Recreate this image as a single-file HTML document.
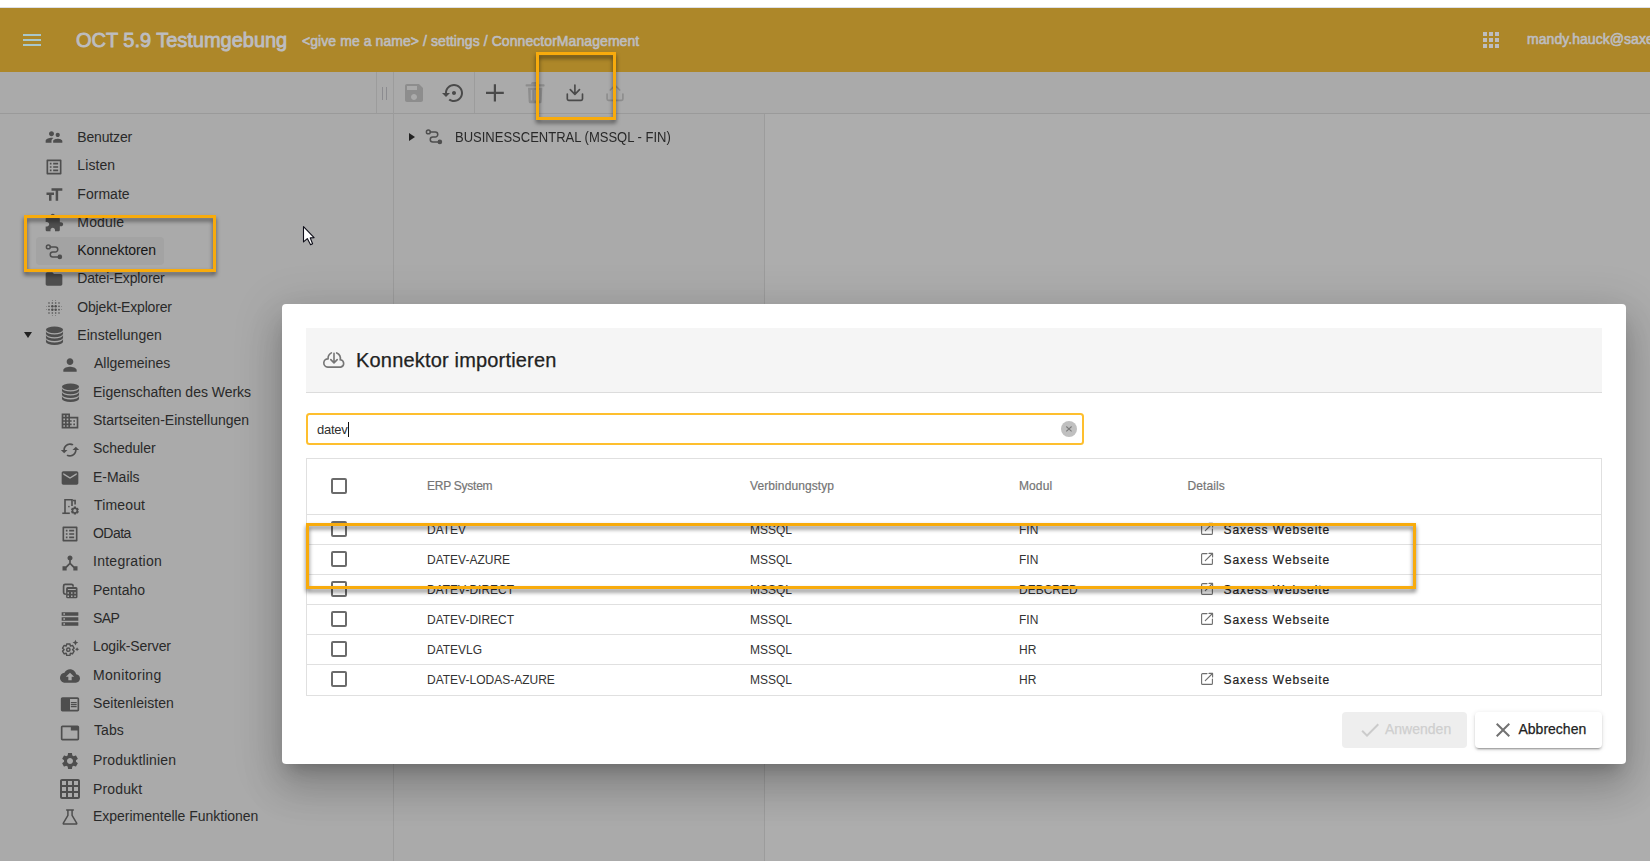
<!DOCTYPE html>
<html lang="de">
<head>
<meta charset="utf-8">
<title>OCT 5.9 Testumgebung - ConnectorManagement</title>
<style>
*{box-sizing:border-box;margin:0;padding:0}
html,body{width:1650px;height:861px;overflow:hidden;background:#aaaaaa;font-family:"Liberation Sans",Arial,sans-serif;}
body{position:relative}
.abs{position:absolute}
#topwhite{left:0;top:0;width:1650px;height:8px;background:#fff;border-bottom:1px solid #dde0e8}
#appbar{left:0;top:8px;width:1650px;height:64px;background:#ad8729}
#appbar .title{left:76px;top:20px;font-size:20px;font-weight:400;letter-spacing:-0.020px;color:#bdbdc0;white-space:nowrap;line-height:24px;-webkit-text-stroke:0.850px #bdbdc0}
#appbar .crumb{left:302px;top:24px;font-size:14px;font-weight:400;letter-spacing:0.070px;color:#bdbdc0;white-space:nowrap;line-height:18px;-webkit-text-stroke:0.600px #bdbdc0}
#appbar .user{left:1527px;top:22px;font-size:14px;font-weight:400;letter-spacing:0.050px;color:#bdbdc0;white-space:nowrap;line-height:18px;-webkit-text-stroke:0.600px #bdbdc0}
#toolbar{left:0;top:72px;width:1650px;height:42px;background:#aaaaaa;border-bottom:1px solid #9a9a9a}
.vline{position:absolute;width:1px;background:#9c9c9c}
svg{display:block;overflow:visible}
.nav{position:absolute;left:0;top:114px;width:393px;height:747px}
.nav .it{position:absolute;left:0;height:28px;white-space:nowrap;font-size:14px;color:#292929;line-height:28px}
.nav .it svg{position:absolute;top:4px;fill:#4e4e4e}
.nav .it span{position:absolute;top:0}
.nav .cur{color:#161616}
.l1 svg{left:44px}.l1 span{left:77.700px}
.l2 svg{left:60px}.l2 span{left:93.700px}
.hl{position:absolute;border:3px solid #f8ab0c;filter:drop-shadow(0.800px 3.500px 2px rgba(0,0,0,.55))}
#dialog{left:282px;top:304px;width:1344px;height:460px;background:#fff;border-radius:4px;box-shadow:0 11px 15px -7px rgba(0,0,0,.2),0 24px 38px 3px rgba(0,0,0,.14),0 9px 46px 8px rgba(0,0,0,.12)}

.th{font-size:12px;line-height:16px;color:#757575;white-space:nowrap;-webkit-text-stroke:0.2px #757575}
.td{font-size:12px;line-height:16px;color:#333;white-space:nowrap}
.lk{font-size:12px;line-height:16px;color:#222;white-space:nowrap;letter-spacing:0.95px;-webkit-text-stroke:0.2px #222}
.btn{font-size:14px;line-height:20px;white-space:nowrap;-webkit-text-stroke:0.25px}
</style>
</head>
<body>
<div id="topwhite" class="abs"></div>
<div id="appbar" class="abs">
  <div class="abs title">OCT 5.9 Testumgebung</div>
  <div class="abs crumb">&lt;give me a name&gt; / settings / ConnectorManagement</div>
  <div class="abs user">mandy.hauck@saxess-software.de</div>
</div>
<div id="toolbar" class="abs"></div>
<div class="abs" style="left:765px;top:114px;width:885px;height:747px;background:#adadad"></div>
<!--NAVS-->
<div class="nav">
<div class="abs sel" style="left:36px;top:123px;width:128px;height:27.500px;background:#a3a3a3;border-radius:4px"></div>
<div class="it l1" style="top:9px"><svg width="20" height="20" viewBox="0 0 24 24" style="margin-left:0.0px;margin-top:0.00px"><path d="M16.5 12c1.38 0 2.49-1.12 2.49-2.5S17.88 7 16.5 7C15.12 7 14 8.12 14 9.5s1.12 2.5 2.5 2.5zM9 11c1.66 0 2.99-1.34 2.99-3S10.66 5 9 5C7.34 5 6 6.34 6 8s1.34 3 3 3zm7.5 3c-1.83 0-5.5.92-5.5 2.75V19h11v-2.25c0-1.83-3.67-2.75-5.5-2.75zM9 13c-2.33 0-7 1.17-7 3.5V19h7v-2.25c0-.85.33-2.34 2.37-3.47C10.5 13.1 9.66 13 9 13z"/></svg><span style="left:77.30px;top:0.2px;letter-spacing:-0.157px">Benutzer</span></div>
<div class="it l1" style="top:37px"><svg width="20" height="20" viewBox="0 0 24 24" style="margin-left:0.0px;margin-top:1.90px"><path d="M19 5v14H5V5h14m1.1-2H3.9c-.5 0-.9.4-.9.9v16.2c0 .4.4.9.9.9h16.2c.4 0 .9-.5.9-.9V3.9c0-.5-.5-.9-.9-.9zM11 7h6v2h-6V7zm0 4h6v2h-6v-2zm0 4h6v2h-6zM7 7h2v2H7zm0 4h2v2H7zm0 4h2v2H7z"/></svg><span style="left:77.30px;top:0.2px;letter-spacing:0.100px">Listen</span></div>
<div class="it l1" style="top:66px"><svg width="20" height="20" viewBox="0 0 24 24" style="margin-left:0.0px;margin-top:0.80px"><path d="M9 4v3h5v12h3V7h5V4H9zm-6 8h3v7h3v-7h3V9H3v3z"/></svg><span style="left:77.30px;top:0.2px;letter-spacing:0.033px">Formate</span></div>
<div class="it l1" style="top:94px"><svg width="20" height="20" viewBox="0 0 24 24" style="margin-left:0.0px;margin-top:1.30px"><path d="M20.5 11H19V7c0-1.1-.9-2-2-2h-4V3.5C13 2.12 11.88 1 10.5 1S8 2.12 8 3.5V5H4c-1.1 0-1.99.9-1.99 2v3.8H3.5c1.49 0 2.7 1.21 2.7 2.7s-1.21 2.7-2.7 2.7H2V20c0 1.1.9 2 2 2h3.8v-1.5c0-1.49 1.21-2.7 2.7-2.7 1.49 0 2.7 1.21 2.7 2.7V22H17c1.1 0 2-.9 2-2v-4h1.5c1.38 0 2.5-1.12 2.5-2.5S21.88 11 20.5 11z"/></svg><span style="left:77.30px;top:0.2px;letter-spacing:0.180px">Module</span></div>
<div class="it l1 cur" style="top:122px"><svg width="20" height="20" viewBox="0 0 24 24" style="margin-left:0.0px;margin-top:0.50px"><g fill="none" stroke="#4e4e4e" stroke-width="1.800" stroke-linecap="round"><circle cx="5.200" cy="7.100" r="2.300"/><path d="M7.700 7.100H13.500a3 3 0 0 1 0 6H10.500a3 3 0 0 0 0 6h6"/></g><circle cx="19" cy="19.100" r="2.800"/></svg><span style="left:77.30px;top:0.2px;letter-spacing:-0.060px">Konnektoren</span></div>
<div class="it l1" style="top:150px"><svg width="20" height="20" viewBox="0 0 24 24" style="margin-left:0.0px;margin-top:1.40px"><path d="M10 4H4c-1.1 0-1.99.9-1.99 2L2 18c0 1.1.9 2 2 2h16c1.1 0 2-.9 2-2V8c0-1.1-.9-2-2-2h-8l-2-2z"/></svg><span style="left:77.30px;top:0.2px;letter-spacing:-0.162px">Datei-Explorer</span></div>
<div class="it l1" style="top:179px"><svg width="20" height="20" viewBox="0 0 24 24" style="margin-left:0.0px;margin-top:1.20px"><g><circle cx="10" cy="10" r="1.5"/><circle cx="10" cy="14" r="1.5"/><circle cx="14" cy="10" r="1.5"/><circle cx="14" cy="14" r="1.5"/><circle cx="6" cy="10" r="1.0"/><circle cx="6" cy="14" r="1.0"/><circle cx="18" cy="10" r="1.0"/><circle cx="18" cy="14" r="1.0"/><circle cx="10" cy="6" r="1.0"/><circle cx="14" cy="6" r="1.0"/><circle cx="10" cy="18" r="1.0"/><circle cx="14" cy="18" r="1.0"/><circle cx="6" cy="6" r="1.0"/><circle cx="18" cy="6" r="1.0"/><circle cx="6" cy="18" r="1.0"/><circle cx="18" cy="18" r="1.0"/><circle cx="3" cy="10" r="0.5"/><circle cx="3" cy="14" r="0.5"/><circle cx="21" cy="10" r="0.5"/><circle cx="21" cy="14" r="0.5"/><circle cx="10" cy="3" r="0.5"/><circle cx="14" cy="3" r="0.5"/><circle cx="10" cy="21" r="0.5"/><circle cx="14" cy="21" r="0.5"/></g></svg><span style="left:77.30px;top:0.2px;letter-spacing:-0.186px">Objekt-Explorer</span></div>
<div class="it l1" style="top:207px"><svg width="19" height="19" viewBox="0 0 24 24" style="margin-left:0.5px;margin-top:1.30px"><ellipse cx="12" cy="4.800" rx="10.800" ry="4.300"/><path d="M1.200 6.5a10.8 4.3 0 0 0 21.600 0v3.3a10.8 4.3 0 0 1-21.600 0zM1.200 11.5a10.8 4.3 0 0 0 21.600 0v3.3a10.8 4.3 0 0 1-21.600 0zM1.200 16.5a10.8 4.3 0 0 0 21.600 0v3.3a10.8 4.3 0 0 1-21.600 0z"/></svg><span style="left:77.30px;top:0.2px;letter-spacing:0.042px">Einstellungen</span></div>
<div class="it l2" style="top:235px"><svg width="20" height="20" viewBox="0 0 24 24" style="margin-left:0.0px;margin-top:1.60px"><path d="M12 12c2.21 0 4-1.79 4-4s-1.79-4-4-4-4 1.790-4 4 1.790 4 4 4zm0 2c-2.670 0-8 1.340-8 4v2h16v-2c0-2.660-5.330-4-8-4z"/></svg><span style="left:94.00px;top:0.2px;letter-spacing:0.000px">Allgemeines</span></div>
<div class="it l2" style="top:264px"><svg width="19" height="19" viewBox="0 0 24 24" style="margin-left:0.5px;margin-top:0.80px"><ellipse cx="12" cy="4.800" rx="10.800" ry="4.300"/><path d="M1.200 6.5a10.8 4.3 0 0 0 21.600 0v3.3a10.8 4.3 0 0 1-21.600 0zM1.200 11.5a10.8 4.3 0 0 0 21.600 0v3.3a10.8 4.3 0 0 1-21.600 0zM1.200 16.5a10.8 4.3 0 0 0 21.600 0v3.3a10.8 4.3 0 0 1-21.600 0z"/></svg><span style="left:93.00px;top:0.2px;letter-spacing:-0.018px">Eigenschaften des Werks</span></div>
<div class="it l2" style="top:292px"><svg width="20" height="20" viewBox="0 0 24 24" style="margin-left:0.0px;margin-top:1.20px"><path d="M12 7V3H2v18h20V7H12zM6 19H4v-2h2v2zm0-4H4v-2h2v2zm0-4H4V9h2v2zm0-4H4V5h2v2zm4 12H8v-2h2v2zm0-4H8v-2h2v2zm0-4H8V9h2v2zm0-4H8V5h2v2zm10 12h-8v-2h2v-2h-2v-2h2v-2h-2V9h8v10zm-2-8h-2v2h2v-2zm0 4h-2v2h2v-2z"/></svg><span style="left:93.00px;top:0.2px;letter-spacing:0.021px">Startseiten-Einstellungen</span></div>
<div class="it l2" style="top:320px"><svg width="20" height="20" viewBox="0 0 24 24" style="margin-left:0.0px;margin-top:1.90px"><path d="M19 8l-4 4h3c0 3.310-2.690 6-6 6-1.010 0-1.970-.250-2.800-.700l-1.460 1.460C8.970 19.540 10.430 20 12 20c4.420 0 8-3.580 8-8h3l-4-4zM6 12c0-3.310 2.690-6 6-6 1.010 0 1.970.250 2.800.700l1.460-1.460C15.030 4.460 13.570 4 12 4c-4.420 0-8 3.580-8 8H1l4 4 4-4H6z"/></svg><span style="left:93.00px;top:0.2px;letter-spacing:-0.062px">Scheduler</span></div>
<div class="it l2" style="top:349px"><svg width="20" height="20" viewBox="0 0 24 24" style="margin-left:0.0px;margin-top:1.00px"><path d="M20 4H4c-1.100 0-1.990.900-1.990 2L2 18c0 1.100.900 2 2 2h16c1.100 0 2-.900 2-2V6c0-1.100-.900-2-2-2zm0 4l-8 5-8-5V6l8 5 8-5v2z"/></svg><span style="left:93.00px;top:0.2px;letter-spacing:-0.017px">E-Mails</span></div>
<div class="it l2" style="top:377px"><svg width="20" height="20" viewBox="0 0 24 24" style="margin-left:0.0px;margin-top:0.80px"><g transform="scale(1.2) translate(-60 -495.400)"><g fill="none" stroke="#4e4e4e" stroke-width="1.600"><path d="M65 512.600V499.200H72V505.400"/><path d="M72.800 499.900H75.100V503.800"/><path d="M62.300 512.650H69.800"/></g><rect x="68.200" y="505.300" width="1.400" height="1.400"/><path fill-rule="evenodd" d="M73.40 507.40 73.91 506.02 75.89 506.02 76.40 507.40 76.40 507.40 77.85 507.15 78.84 508.87 77.90 510.00 77.90 510.00 78.84 511.13 77.85 512.85 76.40 512.60 76.40 512.60 75.89 513.98 73.91 513.98 73.40 512.60 73.40 512.60 71.95 512.85 70.96 511.13 71.90 510.00 71.90 510.00 70.96 508.87 71.95 507.15 73.40 507.40zM73.30000000000001 510.0a1.6 1.6 0 1 0 3.2 0a1.6 1.6 0 1 0 -3.2 0z"/></g></svg><span style="left:94.00px;top:0.2px;letter-spacing:0.150px">Timeout</span></div>
<div class="it l2" style="top:405px"><svg width="20" height="20" viewBox="0 0 24 24" style="margin-left:0.0px;margin-top:1.05px"><path d="M19 5v14H5V5h14m1.1-2H3.9c-.5 0-.9.4-.9.9v16.2c0 .4.4.9.9.9h16.2c.4 0 .9-.5.9-.9V3.9c0-.5-.5-.9-.9-.9zM11 7h6v2h-6V7zm0 4h6v2h-6v-2zm0 4h6v2h-6zM7 7h2v2H7zm0 4h2v2H7zm0 4h2v2H7z"/></svg><span style="left:93.00px;top:0.2px;letter-spacing:-0.525px">OData</span></div>
<div class="it l2" style="top:433px"><svg width="20" height="20" viewBox="0 0 24 24" style="margin-left:0.0px;margin-top:2.00px"><path d="M17 16l-4-4V8.820C14.160 8.400 15 7.300 15 6c0-1.660-1.340-3-3-3S9 4.340 9 6c0 1.300.840 2.400 2 2.820V12l-4 4H3v5h5v-3.050l4-4.200 4 4.200V21h5v-5h-4z"/></svg><span style="left:93.00px;top:0.2px;letter-spacing:0.260px">Integration</span></div>
<div class="it l2" style="top:462px"><svg width="20" height="20" viewBox="0 0 24 24" style="margin-left:0.0px;margin-top:0.90px"><g transform="scale(1.2) translate(-60 -580.900)"><path d="M73.100 585.700V585.800M73.100 585.800a1.600 1.600 0 0 0-1.600-1.600H65.200a1.600 1.600 0 0 0-1.600 1.600V592.400a1.600 1.600 0 0 0 1.600 1.600" fill="none" stroke="#4e4e4e" stroke-width="1.700" stroke-linecap="round"/><path fill-rule="evenodd" d="M67.600 587H76a1.500 1.500 0 0 1 1.500 1.500V596.700a1.500 1.500 0 0 1-1.500 1.500H67.600a1.500 1.500 0 0 1-1.500-1.500V588.500a1.500 1.500 0 0 1 1.500-1.500zM67.90 588.80h7.9v1.1h-7.9zM67.50 592.05h1.5v1.5h-1.5zM67.50 595.35h1.5v1.5h-1.5zM71.00 592.05h1.5v1.5h-1.5zM71.00 595.35h1.5v1.5h-1.5zM74.30 592.05h1.5v1.5h-1.5zM74.30 595.35h1.5v1.5h-1.5z"/></g></svg><span style="left:93.00px;top:0.2px;letter-spacing:-0.017px">Pentaho</span></div>
<div class="it l2" style="top:490px"><svg width="20" height="20" viewBox="0 0 24 24" style="margin-left:0.0px;margin-top:0.90px"><path d="M2 20h20v-4H2v4zm2-3h2v2H4v-2zM2 4v4h20V4H2zm4 3H4V5h2v2zm-4 7h20v-4H2v4zm2-3h2v2H4v-2z"/></svg><span style="left:93.00px;top:0.2px;letter-spacing:-0.600px">SAP</span></div>
<div class="it l2" style="top:518px"><svg width="20" height="20" viewBox="0 0 24 24" style="margin-left:0.0px;margin-top:1.80px"><path d="M7.61 9.50 8.03 7.13 11.97 7.13 12.39 9.50 12.70 9.67 14.97 8.86 16.94 12.27 15.10 13.82 15.10 14.18 16.94 15.73 14.97 19.14 12.70 18.33 12.39 18.50 11.97 20.87 8.03 20.87 7.61 18.50 7.30 18.33 5.03 19.14 3.06 15.73 4.90 14.18 4.90 13.82 3.06 12.27 5.03 8.86 7.30 9.67z" fill="none" stroke="#4e4e4e" stroke-width="1.700" stroke-linejoin="round"/><circle cx="10" cy="14" r="2" fill="none" stroke="#4e4e4e" stroke-width="1.800"/><path d="M18.5 2.0L19.59 4.41 22.0 5.5 19.59 6.59 18.5 9.0 17.41 6.59 15.0 5.5 17.41 4.41zM20.5 11.0L21.28 12.72 23.0 13.5 21.28 14.28 20.5 16.0 19.72 14.28 18.0 13.5 19.72 12.72z"/></svg><span style="left:93.00px;top:0.2px;letter-spacing:-0.127px">Logik-Server</span></div>
<div class="it l2" style="top:547px"><svg width="20" height="20" viewBox="0 0 24 24" style="margin-left:0.0px;margin-top:0.90px"><path d="M19.350 10.040C18.670 6.590 15.640 4 12 4 9.110 4 6.600 5.640 5.350 8.040 2.340 8.360 0 10.910 0 14c0 3.310 2.690 6 6 6h13c2.760 0 5-2.240 5-5 0-2.640-2.050-4.780-4.650-4.960zM14 13v4h-4v-4H7l5-5 5 5h-3z"/></svg><span style="left:93.00px;top:0.4px;letter-spacing:0.322px">Monitoring</span></div>
<div class="it l2" style="top:575px"><svg width="20" height="20" viewBox="0 0 24 24" style="margin-left:0.0px;margin-top:0.70px"><path d="M13 12h7v1.500h-7zm0-2.500h7V11h-7zm0 5h7V16h-7zM21 4H3c-1.100 0-2 .900-2 2v13c0 1.100.900 2 2 2h18c1.100 0 2-.900 2-2V6c0-1.100-.900-2-2-2zm0 15h-9V6h9v13z"/></svg><span style="left:93.00px;top:0.2px;letter-spacing:0.050px">Seitenleisten</span></div>
<div class="it l2" style="top:603px"><svg width="20" height="20" viewBox="0 0 24 24" style="margin-left:0.0px;margin-top:1.90px"><path d="M21 3H3c-1.100 0-2 .900-2 2v14c0 1.100.900 2 2 2h18c1.100 0 2-.900 2-2V5c0-1.100-.900-2-2-2zm0 16H3V5h10v4h8v10z"/></svg><span style="left:94.00px;top:-0.7px;letter-spacing:0.067px">Tabs</span></div>
<div class="it l2" style="top:632px"><svg width="20" height="20" viewBox="0 0 24 24" style="margin-left:0.0px;margin-top:0.80px"><path d="M19.140 12.940c.040-.300.060-.610.060-.940 0-.320-.020-.640-.070-.940l2.030-1.580c.180-.140.230-.410.120-.610l-1.920-3.320c-.120-.220-.370-.290-.590-.220l-2.390.960c-.500-.380-1.030-.700-1.620-.940l-.360-2.540c-.040-.240-.240-.410-.480-.410h-3.840c-.240 0-.430.170-.470.410l-.360 2.540c-.590.240-1.130.570-1.620.940l-2.390-.960c-.220-.080-.470 0-.590.220L2.740 8.870c-.120.210-.080.470.120.610l2.030 1.580c-.050.300-.090.630-.090.940s.020.640.070.940l-2.030 1.580c-.180.140-.230.410-.120.610l1.920 3.320c.120.220.370.290.590.220l2.390-.960c.500.380 1.030.700 1.620.940l.360 2.540c.050.240.240.410.480.410h3.840c.240 0 .440-.170.470-.410l.360-2.540c.590-.240 1.130-.560 1.620-.940l2.390.960c.220.080.470 0 .590-.220l1.920-3.320c.120-.220.070-.470-.120-.610l-2.010-1.580zM12 15.600c-1.980 0-3.600-1.620-3.600-3.600s1.620-3.600 3.600-3.600 3.600 1.620 3.600 3.600-1.620 3.600-3.600 3.600z"/></svg><span style="left:93.00px;top:0.2px;letter-spacing:0.175px">Produktlinien</span></div>
<div class="it l2" style="top:660px"><svg width="24" height="24" viewBox="0 0 24 24" style="margin-left:-2.0px;margin-top:-1.40px"><path d="M20 2H4c-1.100 0-2 .900-2 2v16c0 1.100.900 2 2 2h16c1.100 0 2-.900 2-2V4c0-1.100-.900-2-2-2zM8 20H4v-4h4v4zm0-6H4v-4h4v4zm0-6H4V4h4v4zm6 12h-4v-4h4v4zm0-6h-4v-4h4v4zm0-6h-4V4h4v4zm6 12h-4v-4h4v4zm0-6h-4v-4h4v4zm0-6h-4V4h4v4z"/></svg><span style="left:93.00px;top:0.5px;letter-spacing:0.150px">Produkt</span></div>
<div class="it l2" style="top:688px"><svg width="20" height="20" viewBox="0 0 24 24" style="margin-left:0.0px;margin-top:0.80px"><g fill="none" stroke="#4e4e4e" stroke-width="1.800" stroke-linejoin="round" stroke-linecap="round"><path d="M8 3.500h8M9.500 3.500V10L4 19.300c-.300.600 0 1.200.700 1.200h14.600c.700 0 1-.600.700-1.200L14.500 10V3.500"/></g></svg><span style="left:93.00px;top:0.2px;letter-spacing:-0.017px">Experimentelle Funktionen</span></div>
<svg class="abs" style="left:23px;top:217px" width="10" height="8" viewBox="0 0 10 8"><path d="M1 1h8L5 7z" fill="#222"/></svg>
</div>
<!--NAVE-->
<!--TREES-->
<svg class="abs" style="left:20px;top:28px" width="24" height="24" viewBox="0 0 24 24"><path fill="#a9c7cb" d="M3 18h18v-2H3v2zm0-5h18v-2H3v2zm0-7v2h18V6H3z"/></svg>
<svg class="abs" style="left:1479px;top:28px" width="24" height="24" viewBox="0 0 24 24"><path fill="#bdbdc0" d="M4 8h4V4H4v4zm6 12h4v-4h-4v4zm-6 0h4v-4H4v4zm0-6h4v-4H4v4zm6 0h4v-4h-4v4zm6-10v4h4V4h-4zm-6 4h4V4h-4v4zm6 6h4v-4h-4v4zm0 6h4v-4h-4v4z"/></svg>
<div class="vline" style="left:376px;top:72px;height:41px"></div>
<div class="vline" style="left:393px;top:72px;height:789px"></div>
<div class="vline" style="left:474px;top:72px;height:41px"></div>
<div class="vline" style="left:764px;top:114px;height:747px"></div>
<div class="abs" style="left:382.200px;top:87px;width:1.200px;height:12.700px;background:#8c8c90"></div><div class="abs" style="left:386.300px;top:87px;width:1.200px;height:12.700px;background:#8c8c90"></div>
<svg class="abs" style="left:402.0px;top:80.8px" width="24" height="24" viewBox="0 0 24 24" fill="#8d8d8d"><path d="M17 3H5c-1.11 0-2 .9-2 2v14c0 1.1.89 2 2 2h14c1.1 0 2-.9 2-2V7l-4-4zm-5 16c-1.66 0-3-1.34-3-3s1.34-3 3-3 3 1.34 3 3-1.34 3-3 3zm3-10H5V5h10v4z"/></svg>
<svg class="abs" style="left:442.3px;top:80.8px" width="24" height="24" viewBox="0 0 24 24" fill="#4a4a4a"><path d="M14 12c0-1.1-.9-2-2-2s-2 .9-2 2 .9 2 2 2 2-.9 2-2zm-2-9c-4.97 0-9 4.03-9 9H0l4 4 4-4H5c0-3.870 3.130-7 7-7s7 3.130 7 7-3.130 7-7 7c-1.510 0-2.910-.490-4.060-1.300l-1.420 1.440C8.040 20.300 9.940 21 12 21c4.970 0 9-4.030 9-9s-4.030-9-9-9z"/></svg>
<svg class="abs" style="left:480px;top:78px" width="160" height="30" viewBox="480 78 160 30"><path d="M486 92.8H503.800M494.900 84.200V101.600" stroke="#4a4a4a" stroke-width="2.200" fill="none"/><g fill="#8d8d8d"><rect x="525.600" y="84.300" width="19" height="2.300" rx=".800"/><path d="M531.300 84.500V83.200a1.300 1.300 0 0 1 1.300-1.300h5a1.300 1.300 0 0 1 1.300 1.300V84.500z"/><path d="M528 87.700h14.300l-.700 14a1.600 1.600 0 0 1-1.600 1.500h-9.700a1.600 1.600 0 0 1-1.600-1.500z"/></g><g fill="#a6a6a6"><rect x="530.700" y="89.800" width="1.500" height="10.800" rx=".700"/><rect x="534.400" y="89.800" width="1.500" height="10.800" rx=".700"/><rect x="538.100" y="89.800" width="1.500" height="10.800" rx=".700"/></g><g fill="none" stroke="#4a4a4a" stroke-width="1.650" stroke-linecap="round" stroke-linejoin="round"><path d="M574.900 85V94.300M570.300 89.700L574.900 94.400 579.500 89.700"/><path d="M567.300 94V99a1.300 1.300 0 0 0 1.300 1.300H581.200a1.300 1.300 0 0 0 1.300-1.300V94"/></g><g fill="none" stroke="#8d8d8d" stroke-width="1.650" stroke-linecap="round" stroke-linejoin="round"><path d="M615 94.500V85.400M610.300 90L615 85.300 619.700 90"/><path d="M607.100 94V99a1.300 1.300 0 0 0 1.300 1.300H621.600a1.300 1.300 0 0 0 1.300-1.300V94"/></g></svg>
<svg class="abs" style="left:408px;top:132px" width="8" height="10" viewBox="0 0 8 10"><path d="M1 1v8l6-4z" fill="#222"/></svg>
<svg class="abs" style="left:424px;top:126.400px;fill:#4e4e4e" width="20" height="20" viewBox="0 0 24 24"><g fill="none" stroke="#4e4e4e" stroke-width="1.800" stroke-linecap="round"><circle cx="5.200" cy="7.100" r="2.300"/><path d="M7.700 7.100H13.500a3 3 0 0 1 0 6H10.500a3 3 0 0 0 0 6h6"/></g><circle cx="19" cy="19.100" r="2.800"/></svg>
<div class="abs" style="left:455px;top:126.600px;font-size:14px;line-height:20px;color:#292929;white-space:nowrap;transform:scaleX(.929);transform-origin:0 0">BUSINESSCENTRAL (MSSQL - FIN)</div>
<!--TREEE-->
<!--DLGS-->
<div id="dialog" class="abs">
<div class="abs" style="left:24px;top:24px;width:1296px;height:64.500px;background:#f5f5f5;border-bottom:1px solid #dcdcdc"></div>
<svg class="abs" style="left:38px;top:44px" width="28" height="24" viewBox="320 348 28 24"><g fill="none" stroke="#757575" stroke-width="1.600" stroke-linecap="round" stroke-linejoin="round"><path d="M336.700 352.900A6.200 6.200 0 0 1 340.200 359.800A3.700 3.700 0 0 1 340.800 367.100H327.700A4.100 4.100 0 0 1 328.100 358.900A6.200 6.200 0 0 1 331.400 352.900"/><path d="M334 353.300V362.600M330.800 359.600L334 362.900 337.200 359.600"/></g></svg>
<div class="abs" style="left:74px;top:43.39999999999998px;font-size:20px;line-height:26px;letter-spacing:0.18px;color:#222;white-space:nowrap;-webkit-text-stroke:0.250px #222">Konnektor importieren</div>
<div class="abs" style="left:24px;top:109px;width:778px;height:32px;border:2.200px solid #febf2e;border-radius:3.500px;background:#fff"></div>
<div class="abs" style="left:35px;top:117.5px;font-size:13px;letter-spacing:-0.250px;line-height:16px;color:#303030;white-space:nowrap">datev</div>
<div class="abs" style="left:66.10000000000002px;top:118.19999999999999px;width:1.200px;height:14.600px;background:#111"></div>
<svg class="abs" style="left:779px;top:117px" width="16" height="16" viewBox="0 0 16 16"><circle cx="8" cy="8" r="8" fill="#c0c0c0"/><path d="M5.300 5.500l5.300 4.900M10.600 5.500l-5.300 4.900" stroke="#7a7a7a" stroke-width="1.050" fill="none"/></svg>
<div class="abs" style="left:24px;top:154px;width:1296px;height:238px;border:1px solid #e0e0e0"></div>
<div class="abs" style="left:24px;top:210px;width:1296px;height:1px;background:#e0e0e0"></div>
<div class="abs" style="left:24px;top:240px;width:1296px;height:1px;background:#e0e0e0"></div>
<div class="abs" style="left:24px;top:270px;width:1296px;height:1px;background:#e0e0e0"></div>
<div class="abs" style="left:24px;top:300px;width:1296px;height:1px;background:#e0e0e0"></div>
<div class="abs" style="left:24px;top:330px;width:1296px;height:1px;background:#e0e0e0"></div>
<div class="abs" style="left:24px;top:360px;width:1296px;height:1px;background:#e0e0e0"></div>
<div class="abs" style="left:49px;top:174px;width:16px;height:16px;border:2px solid #6b6b6b;border-radius:2px"></div>
<div class="abs th" style="left:145px;top:174px;letter-spacing:-0.25px">ERP System</div>
<div class="abs th" style="left:468px;top:174px;letter-spacing:0.1px">Verbindungstyp</div>
<div class="abs th" style="left:737px;top:174px;letter-spacing:0.1px">Modul</div>
<div class="abs th" style="left:905.5px;top:174px;letter-spacing:0.1px">Details</div>
<div class="abs" style="left:49px;top:217.20000000000005px;width:16px;height:16px;border:2px solid #6b6b6b;border-radius:2px"></div>
<div class="abs td" style="left:145px;top:217.80000000000007px">DATEV</div>
<div class="abs td" style="left:468px;top:217.80000000000007px">MSSQL</div>
<div class="abs td" style="left:737px;top:217.80000000000007px">FIN</div>
<svg class="abs" style="left:918px;top:217.70000000000005px" width="14" height="14" viewBox="0 0 14 14"><g fill="none" stroke="#6e6e6e" stroke-width="1.100" stroke-linecap="round" stroke-linejoin="round"><path d="M7 1.600H2.600a1 1 0 0 0-1 1v8.800a1 1 0 0 0 1 1h8.800a1 1 0 0 0 1-1V7"/><path d="M5.300 8.700l7.200-7.200M9 1.400h3.600v3.600"/></g></svg>
<div class="abs lk" style="left:941.5px;top:218.30000000000007px">Saxess Webseite</div>
<div class="abs" style="left:49px;top:247.20000000000005px;width:16px;height:16px;border:2px solid #6b6b6b;border-radius:2px"></div>
<div class="abs td" style="left:145px;top:247.80000000000007px">DATEV-AZURE</div>
<div class="abs td" style="left:468px;top:247.80000000000007px">MSSQL</div>
<div class="abs td" style="left:737px;top:247.80000000000007px">FIN</div>
<svg class="abs" style="left:918px;top:247.70000000000005px" width="14" height="14" viewBox="0 0 14 14"><g fill="none" stroke="#6e6e6e" stroke-width="1.100" stroke-linecap="round" stroke-linejoin="round"><path d="M7 1.600H2.600a1 1 0 0 0-1 1v8.800a1 1 0 0 0 1 1h8.800a1 1 0 0 0 1-1V7"/><path d="M5.300 8.700l7.200-7.200M9 1.400h3.600v3.600"/></g></svg>
<div class="abs lk" style="left:941.5px;top:248.30000000000007px">Saxess Webseite</div>
<div class="abs" style="left:49px;top:277.20000000000005px;width:16px;height:16px;border:2px solid #6b6b6b;border-radius:2px"></div>
<div class="abs td" style="left:145px;top:277.80000000000007px">DATEV-DIRECT</div>
<div class="abs td" style="left:468px;top:277.80000000000007px">MSSQL</div>
<div class="abs td" style="left:737px;top:277.80000000000007px">DEBCRED</div>
<svg class="abs" style="left:918px;top:277.70000000000005px" width="14" height="14" viewBox="0 0 14 14"><g fill="none" stroke="#6e6e6e" stroke-width="1.100" stroke-linecap="round" stroke-linejoin="round"><path d="M7 1.600H2.600a1 1 0 0 0-1 1v8.800a1 1 0 0 0 1 1h8.800a1 1 0 0 0 1-1V7"/><path d="M5.300 8.700l7.200-7.200M9 1.400h3.600v3.600"/></g></svg>
<div class="abs lk" style="left:941.5px;top:278.30000000000007px">Saxess Webseite</div>
<div class="abs" style="left:49px;top:307.20000000000005px;width:16px;height:16px;border:2px solid #6b6b6b;border-radius:2px"></div>
<div class="abs td" style="left:145px;top:307.80000000000007px">DATEV-DIRECT</div>
<div class="abs td" style="left:468px;top:307.80000000000007px">MSSQL</div>
<div class="abs td" style="left:737px;top:307.80000000000007px">FIN</div>
<svg class="abs" style="left:918px;top:307.70000000000005px" width="14" height="14" viewBox="0 0 14 14"><g fill="none" stroke="#6e6e6e" stroke-width="1.100" stroke-linecap="round" stroke-linejoin="round"><path d="M7 1.600H2.600a1 1 0 0 0-1 1v8.800a1 1 0 0 0 1 1h8.800a1 1 0 0 0 1-1V7"/><path d="M5.300 8.700l7.200-7.200M9 1.400h3.600v3.600"/></g></svg>
<div class="abs lk" style="left:941.5px;top:308.30000000000007px">Saxess Webseite</div>
<div class="abs" style="left:49px;top:337.20000000000005px;width:16px;height:16px;border:2px solid #6b6b6b;border-radius:2px"></div>
<div class="abs td" style="left:145px;top:337.80000000000007px">DATEVLG</div>
<div class="abs td" style="left:468px;top:337.80000000000007px">MSSQL</div>
<div class="abs td" style="left:737px;top:337.80000000000007px">HR</div>
<div class="abs" style="left:49px;top:367.20000000000005px;width:16px;height:16px;border:2px solid #6b6b6b;border-radius:2px"></div>
<div class="abs td" style="left:145px;top:367.80000000000007px">DATEV-LODAS-AZURE</div>
<div class="abs td" style="left:468px;top:367.80000000000007px">MSSQL</div>
<div class="abs td" style="left:737px;top:367.80000000000007px">HR</div>
<svg class="abs" style="left:918px;top:367.70000000000005px" width="14" height="14" viewBox="0 0 14 14"><g fill="none" stroke="#6e6e6e" stroke-width="1.100" stroke-linecap="round" stroke-linejoin="round"><path d="M7 1.600H2.600a1 1 0 0 0-1 1v8.800a1 1 0 0 0 1 1h8.800a1 1 0 0 0 1-1V7"/><path d="M5.300 8.700l7.200-7.200M9 1.400h3.600v3.600"/></g></svg>
<div class="abs lk" style="left:941.5px;top:368.30000000000007px">Saxess Webseite</div>
<div class="abs" style="left:1060px;top:408px;width:124.500px;height:36px;border-radius:4px;background:#eeeeee"></div>
<svg class="abs" style="left:1076px;top:414.20000000000005px" width="24" height="24" viewBox="0 0 24 24"><path fill="#cbcbcb" d="M9 16.170L4.830 12l-1.400 1.410L9 19 21 7l-1.410-1.410z"/></svg>
<div class="abs btn" style="left:1103px;top:415px;color:#cfcfcf">Anwenden</div>
<div class="abs" style="left:1193px;top:408px;width:127px;height:36px;border-radius:4px;background:#fff;box-shadow:0 3px 1px -2px rgba(0,0,0,.2),0 2px 2px 0 rgba(0,0,0,.14),0 1px 5px 0 rgba(0,0,0,.12)"></div>
<svg class="abs" style="left:1209.3px;top:414.29999999999995px" width="24" height="24" viewBox="0 0 24 24"><path fill="#727272" d="M19 6.410L17.590 5 12 10.590 6.410 5 5 6.410 10.590 12 5 17.590 6.410 19 12 13.410 17.590 19 19 17.590 13.410 12z"/></svg>
<div class="abs btn" style="left:1236.5px;top:415px;color:#222">Abbrechen</div>
</div>
<!--DLGE-->
<!--OVS-->
<div class="hl" style="left:536px;top:52px;width:80px;height:68px"></div>
<div class="hl" style="left:24px;top:215px;width:192px;height:57px"></div>
<div class="hl" style="left:306px;top:523px;width:1110px;height:66px"></div>
<svg class="abs" style="left:300px;top:222px" width="20" height="28" viewBox="300 222 20 28"><path d="M303.500 226.700V241.900L307.300 238.600 310.600 244.700 312.600 243.800 310.200 237.900 314.100 237.600z" fill="#fff" stroke="#0d0d18" stroke-width="1.100" stroke-linejoin="round"/></svg>
<!--OVE-->
</body>
</html>
